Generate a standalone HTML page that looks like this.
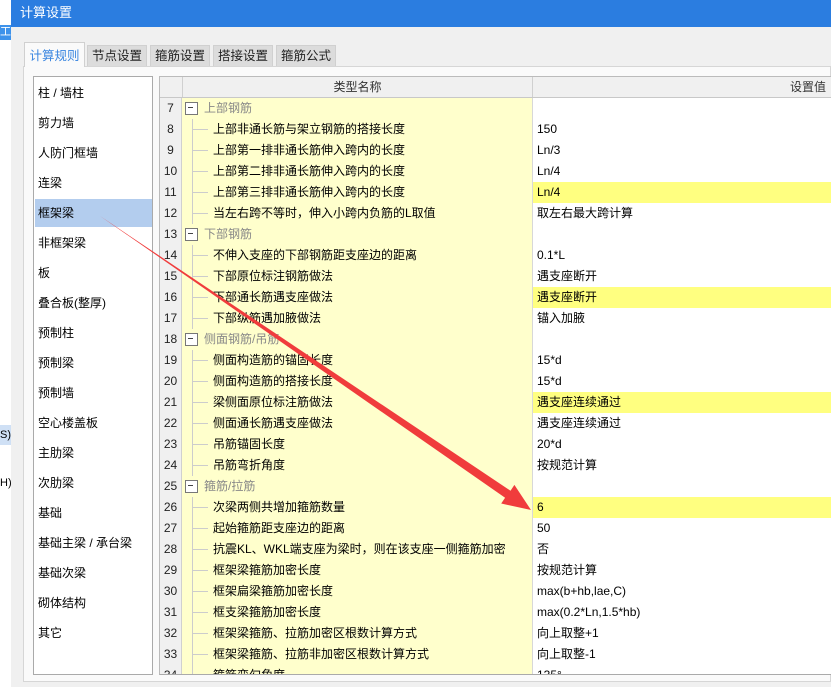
<!DOCTYPE html>
<html><head><meta charset="utf-8"><style>
*{margin:0;padding:0;box-sizing:border-box}
body{width:831px;height:687px;overflow:hidden;background:#f0f0f0;font-family:"Liberation Sans","Noto Sans CJK SC",sans-serif;font-size:12px;color:#000;position:relative}
.a{position:absolute}
.tab{position:absolute;top:45px;height:21px;width:60px;background:#dcdcdc;border:1px solid #d0d0d0;border-bottom:none;text-align:center;line-height:21px;color:#222;font-size:12.5px}
.li{position:absolute;left:1px;width:117px;height:28px;line-height:28px;padding-left:3px}
.r{position:absolute;left:0;width:672px;height:21px;border-bottom:1px solid #d8d8d8;line-height:20px}
.n{position:absolute;left:0;width:22px;height:21px;text-align:center;background:#f0f0f0;border-right:1px solid #d0d0d0;color:#222}
.k{position:absolute;left:22px;width:351px;height:21px;background:#ffffcc;border-right:1px solid #d8d8d8;padding-left:31px;white-space:nowrap;overflow:hidden}
.k:before{content:"";position:absolute;left:10px;top:0;height:21px;border-left:1px solid #ccc}
.k:after{content:"";position:absolute;left:11px;top:10px;width:15px;border-top:1px solid #ccc}
.g{color:#888;padding-left:22px}
.g:after{display:none}
.g:before{content:"";left:3px;top:4px;height:11px;width:11px;border:1px solid #777;background:#fff}
.g i{position:absolute;left:6px;top:9px;width:5px;border-top:1px solid #444}
.v{position:absolute;left:373px;width:299px;height:21px;padding-left:4px;background:#fff}
.y{background:#ffff80}
</style></head><body>
<div class="a" style="left:0;top:0;width:11px;height:687px;background:#fff"></div>
<div class="a" style="left:0;top:25px;width:11px;height:15px;background:#3e92ea;color:#fff;font-size:11px;line-height:15px">工</div>
<div class="a" style="left:0;top:425px;width:11px;height:20px;background:#cfe0f5;font-size:11px;line-height:20px">S)</div>
<div class="a" style="left:0;top:473px;width:11px;height:20px;font-size:11px;line-height:20px">H)</div>
<div class="a" style="left:11px;top:0;width:820px;height:27px;background:#2b7de0;color:#fff;font-size:13px;line-height:26px;padding-left:9px">计算设置</div>
<div class="a" style="left:23px;top:66px;width:808px;height:616px;background:#fafafa;border:1px solid #d6d6d6"></div>
<div class="a" style="left:24px;top:42px;width:61px;height:25px;background:#fafafa;border:1px solid #d0d0d0;border-bottom:none;color:#3a86e0;text-align:center;line-height:26px;font-size:12.5px">计算规则</div>
<div class="tab" style="left:87px">节点设置</div>
<div class="tab" style="left:150px">箍筋设置</div>
<div class="tab" style="left:213px">搭接设置</div>
<div class="tab" style="left:276px">箍筋公式</div>
<div class="a" style="left:33px;top:76px;width:120px;height:599px;background:#fff;border:1px solid #aaa">
<div class="li" style="top:2px">柱 / 墙柱</div>
<div class="li" style="top:32px">剪力墙</div>
<div class="li" style="top:62px">人防门框墙</div>
<div class="li" style="top:92px">连梁</div>
<div class="li" style="top:122px;background:#b3cdee">框架梁</div>
<div class="li" style="top:152px">非框架梁</div>
<div class="li" style="top:182px">板</div>
<div class="li" style="top:212px">叠合板(整厚)</div>
<div class="li" style="top:242px">预制柱</div>
<div class="li" style="top:272px">预制梁</div>
<div class="li" style="top:302px">预制墙</div>
<div class="li" style="top:332px">空心楼盖板</div>
<div class="li" style="top:362px">主肋梁</div>
<div class="li" style="top:392px">次肋梁</div>
<div class="li" style="top:422px">基础</div>
<div class="li" style="top:452px">基础主梁 / 承台梁</div>
<div class="li" style="top:482px">基础次梁</div>
<div class="li" style="top:512px">砌体结构</div>
<div class="li" style="top:542px">其它</div>
</div>
<div class="a" style="left:159px;top:76px;width:672px;height:599px;background:#fff;border-top:1px solid #bbb;border-left:1px solid #bbb;border-bottom:1px solid #aaa;overflow:hidden">
<div class="r" style="top:0;height:21px;background:#f0f0f0;border-bottom:1px solid #c8c8c8">
<div class="a" style="left:22px;top:0;width:351px;height:20px;border-left:1px solid #d0d0d0;border-right:1px solid #d0d0d0;text-align:center;color:#333">类型名称</div>
<div class="a" style="left:600px;width:66px;text-align:right;color:#333">设置值</div>
</div>
<div class="r" style="top:21px"><div class="n">7</div><div class="k g"><i></i>上部钢筋</div><div class="v"></div></div>
<div class="r" style="top:42px"><div class="n">8</div><div class="k">上部非通长筋与架立钢筋的搭接长度</div><div class="v">150</div></div>
<div class="r" style="top:63px"><div class="n">9</div><div class="k">上部第一排非通长筋伸入跨内的长度</div><div class="v">Ln/3</div></div>
<div class="r" style="top:84px"><div class="n">10</div><div class="k">上部第二排非通长筋伸入跨内的长度</div><div class="v">Ln/4</div></div>
<div class="r" style="top:105px"><div class="n">11</div><div class="k">上部第三排非通长筋伸入跨内的长度</div><div class="v y">Ln/4</div></div>
<div class="r" style="top:126px"><div class="n">12</div><div class="k">当左右跨不等时，伸入小跨内负筋的L取值</div><div class="v">取左右最大跨计算</div></div>
<div class="r" style="top:147px"><div class="n">13</div><div class="k g"><i></i>下部钢筋</div><div class="v"></div></div>
<div class="r" style="top:168px"><div class="n">14</div><div class="k">不伸入支座的下部钢筋距支座边的距离</div><div class="v">0.1*L</div></div>
<div class="r" style="top:189px"><div class="n">15</div><div class="k">下部原位标注钢筋做法</div><div class="v">遇支座断开</div></div>
<div class="r" style="top:210px"><div class="n">16</div><div class="k">下部通长筋遇支座做法</div><div class="v y">遇支座断开</div></div>
<div class="r" style="top:231px"><div class="n">17</div><div class="k">下部纵筋遇加腋做法</div><div class="v">锚入加腋</div></div>
<div class="r" style="top:252px"><div class="n">18</div><div class="k g"><i></i>侧面钢筋/吊筋</div><div class="v"></div></div>
<div class="r" style="top:273px"><div class="n">19</div><div class="k">侧面构造筋的锚固长度</div><div class="v">15*d</div></div>
<div class="r" style="top:294px"><div class="n">20</div><div class="k">侧面构造筋的搭接长度</div><div class="v">15*d</div></div>
<div class="r" style="top:315px"><div class="n">21</div><div class="k">梁侧面原位标注筋做法</div><div class="v y">遇支座连续通过</div></div>
<div class="r" style="top:336px"><div class="n">22</div><div class="k">侧面通长筋遇支座做法</div><div class="v">遇支座连续通过</div></div>
<div class="r" style="top:357px"><div class="n">23</div><div class="k">吊筋锚固长度</div><div class="v">20*d</div></div>
<div class="r" style="top:378px"><div class="n">24</div><div class="k">吊筋弯折角度</div><div class="v">按规范计算</div></div>
<div class="r" style="top:399px"><div class="n">25</div><div class="k g"><i></i>箍筋/拉筋</div><div class="v"></div></div>
<div class="r" style="top:420px"><div class="n">26</div><div class="k">次梁两侧共增加箍筋数量</div><div class="v y">6</div></div>
<div class="r" style="top:441px"><div class="n">27</div><div class="k">起始箍筋距支座边的距离</div><div class="v">50</div></div>
<div class="r" style="top:462px"><div class="n">28</div><div class="k">抗震KL、WKL端支座为梁时，则在该支座一侧箍筋加密</div><div class="v">否</div></div>
<div class="r" style="top:483px"><div class="n">29</div><div class="k">框架梁箍筋加密长度</div><div class="v">按规范计算</div></div>
<div class="r" style="top:504px"><div class="n">30</div><div class="k">框架扁梁箍筋加密长度</div><div class="v">max(b+hb,lae,C)</div></div>
<div class="r" style="top:525px"><div class="n">31</div><div class="k">框支梁箍筋加密长度</div><div class="v">max(0.2*Ln,1.5*hb)</div></div>
<div class="r" style="top:546px"><div class="n">32</div><div class="k">框架梁箍筋、拉筋加密区根数计算方式</div><div class="v">向上取整+1</div></div>
<div class="r" style="top:567px"><div class="n">33</div><div class="k">框架梁箍筋、拉筋非加密区根数计算方式</div><div class="v">向上取整-1</div></div>
<div class="r" style="top:588px"><div class="n">34</div><div class="k">箍筋弯勾角度</div><div class="v">135°</div></div>
</div>
<svg class="a" style="left:0;top:0" width="831" height="687"><polygon points="100,216 510.5,490.7 514.4,484.9 531,510 501.2,503.5 505.1,497.7" fill="#f03c3c"/></svg>
</body></html>
